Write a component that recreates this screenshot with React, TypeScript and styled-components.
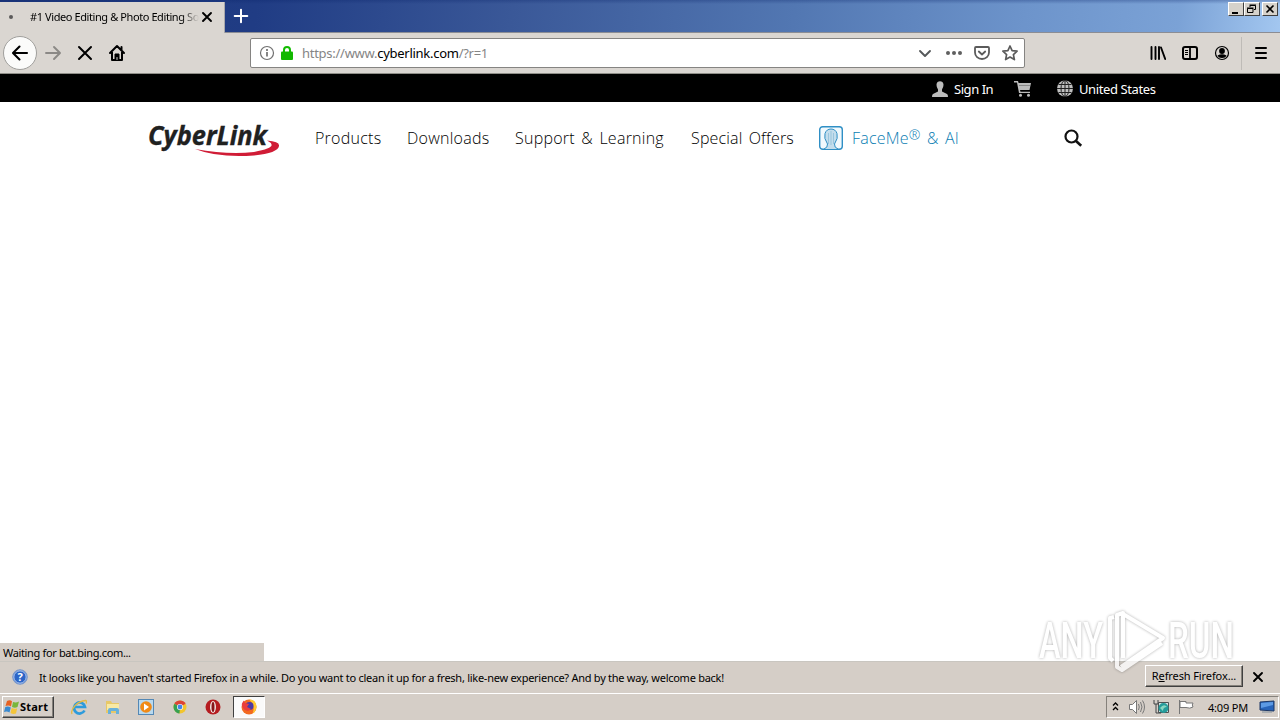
import styled, { createGlobalStyle, css } from 'styled-components';

const GlobalStyle = createGlobalStyle`
  * { box-sizing: border-box; }
  body {
    margin: 0;
    overflow: hidden;
    background: #fff;
    font-family: 'Noto Sans', 'Open Sans', sans-serif;
  }
  svg { display: block; flex: none; }
`;

const Screen = styled.div`
  position: relative;
  display: flex;
  flex-direction: column;
  width: 1280px;
  height: 720px;
  overflow: hidden;
  color: #000;
`;

/* ---------- browser ---------- */

const TitleBar = styled.div`
  display: flex;
  align-items: flex-start;
  height: 33px;
  flex: none;
  background:
    linear-gradient(180deg, rgba(10, 36, 106, 0.3) 0, transparent 4px),
    linear-gradient(97deg, #1d377c 0%, #203c84 20%, #3a5898 40%, #5277b2 62%, #6d94cb 80%, #7ba2d6 92%, #a3c7f0 100%);
  border-bottom: 1px solid #8b8d94;
`;

const Tab = styled.div`
  display: flex;
  align-items: center;
  width: 225px;
  height: 31px;
  margin-top: 2px;
  padding-left: 9px;
  padding-bottom: 1px;
  background: #dad6d1;
  border-right: 1px solid #a8a8ac;
`;

const LoadingDot = styled.span`
  width: 4px;
  height: 4px;
  border-radius: 50%;
  background: #5b5a5a;
`;

const TabTitle = styled.div`
  width: 171px;
  margin-left: 17px;
  white-space: nowrap;
  font-size: 11px;
  line-height: 16px;
  letter-spacing: -0.41px;
  mask-image: linear-gradient(90deg, #000 152px, transparent 169px);
`;

const NewTab = styled.div`
  padding: 8px 0 0 8px;
`;

const WindowButtons = styled.div`
  display: flex;
  margin: 2px 2px 0 auto;
`;

const WindowButton = styled.span<{ $gap?: boolean }>`
  width: 16px;
  height: 14px;
  margin-left: ${(p) => (p.$gap ? '2px' : '0')};
  background: #d6d2cb;
  border: 1px solid;
  border-color: #fff #404040 #404040 #fff;
`;

const Toolbar = styled.div`
  display: flex;
  align-items: center;
  height: 41px;
  flex: none;
  padding-left: 3px;
  background: #dad6d1;
  border-bottom: 1px solid #8f8e88;
`;

const BackButton = styled.div`
  display: flex;
  align-items: center;
  justify-content: center;
  width: 34px;
  height: 34px;
  border-radius: 50%;
  border: 1px solid #a09f9c;
  background: #fbfbfa;
`;

const NavIcons = styled.div`
  display: flex;
  gap: 12px;
  margin-left: 6px;
`;

const UrlBar = styled.div`
  display: flex;
  align-items: center;
  width: 775px;
  height: 30px;
  margin-left: 123px;
  padding: 0 6px 0 8px;
  background: #fff;
  border: 1px solid #858482;
  border-radius: 2px;
`;

const Url = styled.div`
  flex: 1;
  margin-left: 5px;
  font-size: 13px;
  line-height: 18px;
  color: #858585;
  letter-spacing: -0.27px;

  b {
    font-weight: 400;
    color: #000;
  }
`;

const UrlActions = styled.div`
  display: flex;
  gap: 12px;
`;

const ToolbarEnd = styled.div`
  display: flex;
  gap: 16px;
  margin-left: 125px;
`;

const MenuSlot = styled.div`
  display: flex;
  align-items: center;
  height: 33px;
  margin-left: 11px;
  padding-left: 11px;
  border-left: 1px solid #bebbb7;
`;

/* ---------- page ---------- */

const TopStrip = styled.div`
  display: flex;
  align-items: center;
  height: 28px;
  flex: none;
  padding: 2px 0 0 932px;
  background: #000;
  color: #fff;
  font-size: 13px;
`;

const StripText = styled.span<{ $width: number; $spacing?: string }>`
  width: ${(p) => p.$width}px;
  margin-left: 6px;
  white-space: nowrap;
  letter-spacing: ${(p) => p.$spacing ?? '0'};
`;

const SiteHeader = styled.header`
  display: flex;
  align-items: center;
  height: 73px;
  flex: none;
  padding-left: 146px;
  padding-bottom: 2px;
`;

const SiteNav = styled.nav`
  display: flex;
  align-items: center;
  margin-left: 33px;
`;

const NavLink = styled.span<{ $width: number; $spacing?: string; $accent?: boolean }>`
  width: ${(p) => p.$width}px;
  white-space: nowrap;
  font-family: 'Open Sans', 'Noto Sans', sans-serif;
  font-weight: 300;
  font-size: 16px;
  line-height: 24px;
  letter-spacing: ${(p) => p.$spacing ?? '0.25px'};
  word-spacing: 2px;
  color: ${(p) => (p.$accent ? '#0a7db3' : '#000')};

  sup {
    font-size: 14px;
    line-height: 0;
    vertical-align: 4px;
  }
`;

const PageBody = styled.main`
  display: flex;
  align-items: flex-end;
  flex: 1;
`;

const StatusText = styled.div`
  width: 264px;
  height: 18px;
  padding-left: 3px;
  background: #d5cec7;
  font-size: 11px;
  line-height: 19px;
  letter-spacing: -0.35px;
`;

const NoticeBar = styled.div`
  display: flex;
  align-items: center;
  height: 32px;
  flex: none;
  padding-left: 12px;
  padding-bottom: 1px;
  background: #d5cec7;
  border-top: 1px solid #c9c6c0;
  font-size: 11px;
`;

const NoticeText = styled.span`
  width: 700px;
  margin-left: 11px;
  white-space: nowrap;
  letter-spacing: -0.265px;
`;

const raised = css`
  border: 1px solid;
  border-color: #fff #404040 #404040 #fff;
  box-shadow: inset -1px -1px 0 #85817b;
`;

const RefreshButton = styled.button`
  width: 98px;
  height: 22px;
  margin-left: 406px;
  margin-right: 9px;
  margin-top: -2px;
  padding: 0;
  background: #d5cec7;
  color: #000;
  font: 11px/18px 'Noto Sans', sans-serif;
  letter-spacing: -0.1px;
  white-space: nowrap;
  ${raised}
`;

/* ---------- taskbar ---------- */

const Taskbar = styled.div`
  display: flex;
  align-items: center;
  height: 27px;
  flex: none;
  padding: 0 1px 0 2px;
  background: #d5cec7;
  border-top: 1px solid #fff;
`;

const StartButton = styled.div`
  display: flex;
  align-items: center;
  width: 52px;
  height: 22px;
  padding-left: 1px;
  font: bold 11px/18px 'Noto Sans', sans-serif;
  letter-spacing: 0.2px;
  ${raised}
`;

const QuickLaunch = styled.div`
  display: flex;
  gap: 17.5px;
  margin-left: 17px;
`;

const ActiveTask = styled.div`
  display: flex;
  align-items: center;
  justify-content: center;
  width: 32px;
  height: 22px;
  margin-left: 12px;
  background: #fafafa;
  border: 1px solid;
  border-color: #404040 #fff #fff #404040;
`;

const Tray = styled.div`
  display: flex;
  align-items: center;
  width: 173px;
  height: 22px;
  margin-left: auto;
  padding-left: 4px;
  border: 1px solid;
  border-color: #85817b #fff #fff #85817b;
  font-size: 11px;
`;

const Clock = styled.span`
  width: 51px;
  margin-left: 14px;
  white-space: nowrap;
  letter-spacing: -0.2px;
`;

const TrayGap = styled.span`
  width: 8px;
`;

const CartSlot = styled.span`
  width: 43px;
  flex: none;
`;

const Watermark = styled.svg`
  position: absolute;
  left: 1030px;
  top: 602px;
  opacity: 0.75;
  filter: drop-shadow(0 0 1.5px rgba(0, 0, 0, 0.42));
`;

const Glyph = ({ d, color = '#000', width = 2, size = 20 }: { d: string; color?: string; width?: number; size?: number }) => (
  <svg width={size} height={size} viewBox={`0 0 ${size} ${size}`} fill="none" stroke={color} strokeWidth={width} strokeLinecap="round" strokeLinejoin="round">
    <path d={d} />
  </svg>
);

const Browser = () => (
  <>
    <TitleBar>
      <Tab>
        <LoadingDot />
        <TabTitle>#1 Video Editing &amp; Photo Editing So</TabTitle>
        <Glyph size={12} width={1.9} d="M2 2l8 8M10 2l-8 8" />
      </Tab>
      <NewTab>
        <Glyph size={16} color="#fff" d="M8 1.7v12.6M1.7 8h12.6" />
      </NewTab>
      <WindowButtons>
        <WindowButton>
          <svg width="14" height="12"><path d="M3 9h6v2H3z" /></svg>
        </WindowButton>
        <WindowButton>
          <svg width="14" height="12" fill="none" stroke="#000">
            <path d="M5 4V2.5h5.500v4H9M4.500 2h6.500M2.500 5.500h5.500v4H2.500zM2 5h6.500" />
          </svg>
        </WindowButton>
        <WindowButton $gap>
          <svg width="14" height="12" stroke="#000" strokeWidth="1.6"><path d="M3.500 2.500l7 7M10.500 2.500l-7 7" /></svg>
        </WindowButton>
      </WindowButtons>
    </TitleBar>
    <Toolbar>
      <BackButton>
        <Glyph size={18} width={2.1} d="M16 9H2.500M8.500 2.500L2 9l6.500 6.500" />
      </BackButton>
      <NavIcons>
        <Glyph color="#8b8986" width={1.9} d="M3 10h13.500M11 4l6 6-6 6" />
        <Glyph d="M4 4l12 12M16 4L4 16" />
        <svg width="20" height="20" fill="none" stroke="#000" strokeWidth="2" strokeLinecap="round" strokeLinejoin="round">
          <path d="M3 10l7-7 7 7M5 9v8h10V9M14.500 4v3" />
          <path d="M8 17v-6h4v6z" fill="#000" strokeWidth="1" />
          <path d="M10 14.500v2" stroke="#dad6d1" strokeWidth="1" />
        </svg>
      </NavIcons>
      <UrlBar>
        <svg width="16" height="16" fill="none" stroke="#707070">
          <circle cx="8" cy="8" r="6.500" strokeWidth="1.200" />
          <path d="M8 7v4.500M8 4v2" strokeWidth="1.700" />
        </svg>
        <svg width="22" height="16">
          <path d="M9 7V5a3 3 0 0 1 6 0v2" fill="none" stroke="#12bc00" strokeWidth="2" />
          <rect x="6" y="6.500" width="12" height="8.500" rx="1" fill="#12b800" />
        </svg>
        <Url>https://www.<b>cyberlink.com</b>/?r=1</Url>
        <UrlActions>
          <Glyph size={16} color="#55585a" width={1.9} d="M4 6l5 5 5-5" />
          <svg width="18" height="16" fill="#5f5f5f">
            <circle cx="4" cy="8" r="2" /><circle cx="10" cy="8" r="2" /><circle cx="16" cy="8" r="2" />
          </svg>
          <Glyph size={16} color="#5b5b5b" width={1.8} d="M2 2h12a1 1 0 0 1 1 1v4.500a7 6.500 0 0 1-14 0V3a1 1 0 0 1 1-1zM4.800 6.500L8 9.500l3.200-3" />
          <Glyph size={16} color="#5b5b5b" width={1.7} d="M8 1l2.100 4.600 5 .6-3.700 3.400 1 5L8 12.100l-4.400 2.500 1-5L.9 6.200l5-.6z" />
        </UrlActions>
      </UrlBar>
      <ToolbarEnd>
        <Glyph size={16} width={1.900} d="M1.500 2v12M5.500 2v12M9 2v12M11 2.500l4.200 11.500" />
        <svg width="16" height="16" fill="none" stroke="#000">
          <rect x="1" y="2" width="14" height="12" rx="2" strokeWidth="2" />
          <path d="M8 2v12" strokeWidth="1.800" /><path d="M3 5.500h3M3 7.500h3M3 9.500h3" />
        </svg>
        <svg width="16" height="16">
          <circle cx="8" cy="8" r="6.500" fill="none" stroke="#000" strokeWidth="1.200" />
          <circle cx="8" cy="6" r="2.900" /><path d="M3.500 10.500q4.500-2.500 9 0Q11.500 13 8 13t-4.500-2.500z" />
        </svg>
      </ToolbarEnd>
      <MenuSlot>
        <Glyph size={16} d="M3 3h10M3 8h10M3 13h10" />
      </MenuSlot>
    </Toolbar>
  </>
);

const CyberLinkLogo = () => (
  <svg width="136" height="44" viewBox="0 0 136 44">
    <text x="2" y="28.500" fontFamily="Open Sans, Noto Sans, sans-serif" fontSize="27" fontWeight="700" fontStyle="italic" fill="#20211f" stroke="#20211f" strokeWidth=".4" textLength="119" lengthAdjust="spacingAndGlyphs">CyberLink</text>
    <path d="M49 33Q82 39 108 36Q127 32.500 125.500 28.500Q125 26.500 121 24.500Q134 25.500 133 30Q132 37 108 39.500Q72 42 49 33z" fill="#d01c36" />
  </svg>
);

const Site = () => (
  <>
    <TopStrip>
      <svg width="16" height="18" fill="#bcbcbc">
        <path d="M4.500 4.500C4.500 0 11.500 0 11.500 4.500 11.500 7 10.500 8 10 9.500v2l5 2.500q1 .6 1 3H0q0-2.400 1-3l5-2.500v-2C5.500 8 4.500 7 4.500 4.500z" />
      </svg>
      <StripText $width={60} $spacing="-0.45px">Sign In</StripText>
      <CartSlot>
        <svg width="18" height="18" viewBox="0 0 18 18" fill="#bcbcbc">
          <path d="M0 1h4l.6 2H17l-1.500 7H6l.5 1.700H16V13H5L3 2.500H0z" />
          <circle cx="6.500" cy="15.200" r="1.500" /><circle cx="14.500" cy="15.200" r="1.500" />
          <path d="M5 5.500h11" stroke="#555" strokeWidth=".5" />
        </svg>
      </CartSlot>
      <svg width="16" height="18" viewBox="1 0 16 18" fill="#c0c0c0" stroke="#222" strokeWidth="1">
        <circle cx="9" cy="8.500" r="8" stroke="none" />
        <ellipse cx="9" cy="8.500" rx="4" ry="8" fill="none" /><path d="M9 .5v16M1 8.500h16M2.500 4.500h13M2.500 12.500h13" />
      </svg>
      <StripText $width={90} $spacing="-0.4px">United States</StripText>
    </TopStrip>
    <SiteHeader>
      <CyberLinkLogo />
      <SiteNav>
        <NavLink $width={92}>Products</NavLink>
        <NavLink $width={108}>Downloads</NavLink>
        <NavLink $width={176}>Support &amp; Learning</NavLink>
        <NavLink $width={128} $spacing="0.15px">Special Offers</NavLink>
        <svg width="25" height="24" fill="none" stroke="#2f8fc5">
          <rect x=".7" y=".7" width="22.600" height="22.600" rx="3" strokeWidth="1.400" fill="#f1f9fd" />
          <path d="M5 23q4-1.500 3.500-5Q4.500 12 6 7.500 7.500 3 12 3t6 4.500q1.500 4.500-2.500 10.500-.5 3.500 3.500 5" fill="#c3ddec" />
          <path d="M9.500 7v11M12 5v14M14.500 7v11" stroke="#86bad7" strokeWidth=".7" />
        </svg>
        <TrayGap as="i" />
        <NavLink $width={211} $accent $spacing="0.2px">FaceMe<sup>®</sup> &amp; AI</NavLink>
        <svg width="20" height="20" fill="none" stroke="#111" strokeWidth="2.200">
          <circle cx="8.500" cy="8.500" r="6" /><path d="M13 13l5.200 4.800" strokeWidth="2.600" />
        </svg>
      </SiteNav>
    </SiteHeader>
    <PageBody>
      <StatusText>Waiting for bat.bing.com...</StatusText>
    </PageBody>
  </>
);

const TaskIcons = () => (
  <QuickLaunch>
    <svg width="16" height="16" fill="none">
      <path d="M13.500 11.500A5.500 5.500 0 1 1 14 8H4" stroke="#2d9bdc" strokeWidth="2.700" />
      <path d="M1 15C-1 10 7 2 14.500 1.500q2 .5.5 3" stroke="#e2ba45" strokeWidth="1.300" />
    </svg>
    <svg width="16" height="16">
      <path d="M1 2h5l1 2h7v10H1z" fill="#e7c868" /><path d="M2 5h12v6H2z" fill="#f8e9a4" />
      <path d="M3 15v-4q0-2 2-2h7q2 0 2 2v4h-3v-3H6v3z" fill="#69b1da" />
    </svg>
    <svg width="16" height="16">
      <rect x=".5" y=".5" width="15" height="15" fill="#b9d9ee" stroke="#5488b5" /><circle cx="8" cy="8" r="5.800" fill="#f08a16" />
      <path d="M6 4.500l5 3.500-5 3.500z" fill="#fff" />
    </svg>
    <svg width="16" height="16">
      <circle cx="8" cy="8" r="6.500" fill="#f2c52d" />
      <path d="M8 8L2.400 4.700A6.500 6.500 0 0 1 13.600 4.700z" fill="#dc4437" /><path d="M8 8L2.400 4.700A6.500 6.500 0 0 0 7.500 14.500z" fill="#37a052" />
      <circle cx="8" cy="8" r="3" fill="#fff" /><circle cx="8" cy="8" r="2.400" fill="#4385e8" />
    </svg>
    <svg width="16" height="16">
      <circle cx="8" cy="8" r="7.500" fill="#b51c20" /><ellipse cx="8" cy="8" rx="3" ry="6" fill="#f1e5e2" /><ellipse cx="8" cy="8" rx="1.500" ry="5" fill="#86151a" />
    </svg>
  </QuickLaunch>
);

const Desktop = () => (
  <>
    <NoticeBar>
      <svg width="16" height="16">
        <circle cx="8" cy="8" r="7.300" fill="#2c65c7" stroke="#829dc9" /><circle cx="8" cy="8" r="6.200" fill="none" stroke="#dce7fa" strokeWidth=".8" />
        <text x="8" y="12" textAnchor="middle" fontFamily="Noto Sans, sans-serif" fontSize="11" fontWeight="700" fill="#fff">?</text>
      </svg>
      <NoticeText>It looks like you haven't started Firefox in a while. Do you want to clean it up for a fresh, like-new experience? And by the way, welcome back!</NoticeText>
      <RefreshButton>R<u>e</u>fresh Firefox...</RefreshButton>
      <Glyph size={12} width={1.900} d="M2 2l8 8M10 2l-8 8" />
    </NoticeBar>
    <Taskbar>
      <StartButton>
        <svg width="16" height="16">
          <path d="M3 2q3-1.500 5 .3L7 7.500Q5 6 1.500 7z" fill="#e76222" /><path d="M9 3q3 1 6-.5L13.500 8Q11 9.500 8 8z" fill="#79b63b" />
          <path d="M1.300 8Q4 7 6.800 8.500L5.500 13.500Q3 12 0 13z" fill="#3a8ad0" /><path d="M7.700 9q3 1.500 5.500.3L12 14.500Q9 15.500 6.500 14z" fill="#f4c53a" />
        </svg>
        Start
      </StartButton>
      <TaskIcons />
      <ActiveTask>
        <svg width="16" height="16">
          <circle cx="8" cy="8" r="7.500" fill="#f26a20" /><path d="M8 .5Q16 1 15.500 8q-.5 5-4 6.500Q15 7 8 .5z" fill="#ffca32" />
          <circle cx="8.500" cy="7" r="4" fill="#4a3aa6" /><path d="M.8 5Q2 2 3 1.500L4 4l4 1-2 3 4 2q-2 3-6 1Q1 9 .8 5z" fill="#e93c3c" />
        </svg>
      </ActiveTask>
      <Tray>
        <svg width="10" height="14" fill="none" stroke="#000" strokeWidth="1.300"><path d="M2 5.500L4.500 3 7 5.500M2 10l2.500-2.500L7 10" /></svg>
        <TrayGap />
        <svg width="16" height="16" fill="#fff" stroke="#777">
          <path d="M.5 5.500h3l4-4v13l-4-4h-3z" /><path d="M9.500 5q1.500 3 0 6M11.500 3q3 5 0 10M13.500 1.500q4 6.500 0 13" fill="none" />
        </svg>
        <TrayGap />
        <svg width="17" height="16">
          <path d="M5.500 3.500h10v10h-10z" fill="#d8e4e5" stroke="#4f5354" /><path d="M1 1v4h4V1M3 5v9h5" fill="none" stroke="#414547" />
          <circle cx="10.500" cy="9" r="5" fill="#269c9b" /><path d="M7 9q4-5 7-1-4 0-4 4z" fill="#8bd6c1" />
        </svg>
        <TrayGap />
        <svg width="16" height="16" fill="#fff" stroke="#777"><path d="M1.500 1v14M2 2.500h6v1.500h7q-1.500 2 0 4-3 2-7 .5H2z" /></svg>
        <Clock>4:09 PM</Clock>
        <svg width="16" height="16">
          <path d="M1 3l14-1v10L1 11z" fill="#2864ba" stroke="#1d3764" /><path d="M2 4l12-1v3L2 9z" fill="#5d9ae4" /><path d="M3 13h10" stroke="#83909c" />
        </svg>
      </Tray>
    </Taskbar>
  </>
);

const AnyRun = () => (
  <Watermark width="214" height="76">
    <g fontFamily="Roboto, sans-serif" fontSize="50" fontWeight="500" fill="#fff">
      <text x="9" y="56" textLength="64" lengthAdjust="spacingAndGlyphs">ANY</text>
      <text x="138" y="56" textLength="66" lengthAdjust="spacingAndGlyphs">RUN</text>
    </g>
    <g fill="none" stroke="#fff" strokeWidth="4" strokeLinejoin="round">
      <path d="M93 56V12l40 24-42 29" />
      <path d="M93 17V11l-6 2v52l5 3 40-27" />
      <path d="M84 15l-4 1v40l3 3" />
    </g>
  </Watermark>
);

export default function App() {
  return (
    <Screen>
      <GlobalStyle />
      <Browser />
      <Site />
      <Desktop />
      <AnyRun />
    </Screen>
  );
}
